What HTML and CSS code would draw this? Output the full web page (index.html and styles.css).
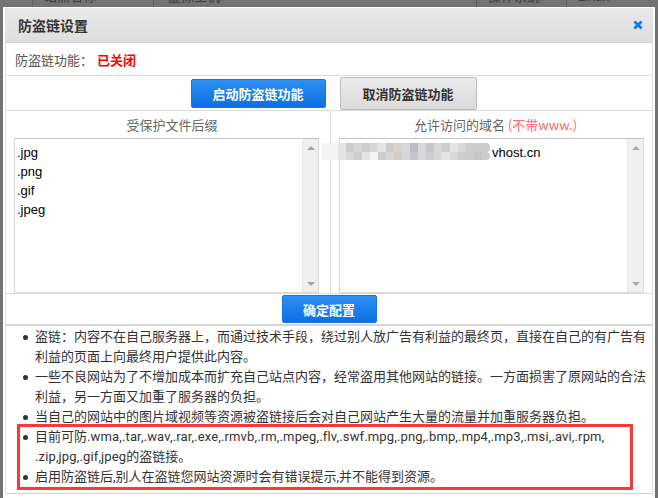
FILE: index.html
```html
<!DOCTYPE html>
<html lang="zh-CN">
<head>
<meta charset="utf-8">
<title>防盗链设置</title>
<link rel="stylesheet" href="styles.css">
</head>
<body>
<div class="bg">
  <div class="bg-row">
    <div class="bg-cell w1"></div>
    <div class="bg-cell w2">站点名称</div>
    <div class="bg-cell w3">虚拟主机</div>
    <div class="bg-cell w4">操作系统</div>
    <div class="bg-cell w5">Linux</div>
  </div>
</div>

<div class="dialog">
  <div class="title">
    <span>防盗链设置</span>
    <svg class="close" width="10" height="10" viewBox="0 0 10 10"><path d="M1.4 1.4 L8.6 8.6 M8.6 1.4 L1.4 8.6" stroke="#1578e6" stroke-width="2.8" stroke-linecap="butt"/></svg>
  </div>
  <div class="content">
    <div class="status"><span class="lbl">防盗链功能：</span><span class="off">已关闭</span></div>
    <div class="btns">
      <button class="btn blue">启动防盗链功能</button>
      <button class="btn gray">取消防盗链功能</button>
    </div>
    <div class="cols heads">
      <div class="head">受保护文件后缀</div>
      <div class="head right">允许访问的域名 <span class="pink">(不带www.)</span></div>
    </div>
    <div class="cols areas">
      <div class="cell">
        <div class="ta">
          <div class="ta-text">.jpg<br>.png<br>.gif<br>.jpeg</div>
          <div class="sb"><span class="up"></span><span class="down"></span></div>
        </div>
      </div>
      <div class="cell right">
        <div class="ta">
          <div class="ta-text"><span class="hidden-part"></span>vhost.cn</div>
          <div class="sb"><span class="up"></span><span class="down"></span></div>
        </div>
        <div class="mosaic">
          <span class="g0"></span><span class="g0"></span><span class="g1"></span><span class="g3"></span><span class="g2"></span><span class="g3"></span><span class="g2"></span><span class="g1"></span><span class="g3"></span><span class="g6"></span><span class="g2"></span><span class="g5"></span><span class="g2"></span><span class="g4"></span><span class="g2"></span><span class="g3"></span><span class="g1"></span><span class="g2"></span><span class="g3"></span><span class="g3"></span><span class="g3 end"></span>
          <span class="g0"></span><span class="g0"></span><span class="g1"></span><span class="g2"></span><span class="g3"></span><span class="g1"></span><span class="g0"></span><span class="g3"></span><span class="g2"></span><span class="g3"></span><span class="g2"></span><span class="g4"></span><span class="g2"></span><span class="g3"></span><span class="g2"></span><span class="g1"></span><span class="g2"></span><span class="g3"></span><span class="g3"></span><span class="g4"></span><span class="g3 end"></span>
        </div>
      </div>
    </div>
    <div class="save">
      <button class="btn blue small">确定配置</button>
    </div>
    <div class="notes">
      <ul>
        <li>盗链：内容不在自己服务器上，而通过技术手段，绕过别人放广告有利益的最终页，直接在自己的有广告有<br>利益的页面上向最终用户提供此内容。</li>
        <li>一些不良网站为了不增加成本而扩充自己站点内容，经常盗用其他网站的链接。一方面损害了原网站的合法<br>利益，另一方面又加重了服务器的负担。</li>
        <li>当自己的网站中的图片域视频等资源被盗链接后会对自己网站产生大量的流量并加重服务器负担。</li>
        <li>目前可防<span class="ext">.wma,.tar,.wav,.rar,.exe,.rmvb,.rm,.mpeg,.flv,.swf.mpg,.png,.bmp,.mp4,.mp3,.msi,.avi,.rpm,<br>.zip,jpg,.gif,jpeg</span>的盗链接。</li>
        <li>启用防盗链后,别人在盗链您网站资源时会有错误提示,并不能得到资源。</li>
      </ul>
      <div class="redbox"></div>
    </div>
  </div>
</div>
</body>
</html>
```

FILE: styles.css
```css
* { box-sizing: border-box; }

body {
  margin: 0;
  width: 658px;
  height: 498px;
  overflow: hidden;
  position: relative;
  background: #737373;
  font-family: "Liberation Sans", "Noto Sans CJK SC", sans-serif;
}

/* dimmed page behind the dialog */
.bg {
  height: 7px;
  overflow: hidden;
}
.bg-row {
  display: flex;
  margin-top: -11px;
  height: 18px;
}
.bg-cell {
  font-size: 13px;
  line-height: 16px;
  color: #3c3c3c;
  border-left: 1px solid #5e5e5e;
  padding-left: 11px;
  white-space: nowrap;
}
.bg-cell.w1 { width: 32px; border-left: none; }
.bg-cell.w2 { width: 121px; }
.bg-cell.w3 { width: 323px; padding-left: 14px; }
.bg-cell.w4 { width: 90px; }
.bg-cell.w5 { flex: 1; }

/* dialog */
.dialog {
  position: absolute;
  left: 3px;
  top: 7px;
  width: 652px;
  height: 500px;
  background: #fff;
  padding: 1px 2px 0;
}

.title {
  height: 35px;
  background: linear-gradient(#e9e9e9, #dedede);
  border-bottom: 1px solid #d4d4d4;
  display: flex;
  align-items: center;
  justify-content: space-between;
  padding: 0 10px 0 13px;
  font-family: "Noto Sans CJK SC", sans-serif;
  font-size: 14px;
  font-weight: bold;
  color: #333;
}
.close { display: block; }

.content {
  border-left: 1px solid #e0e0e0;
  border-right: 1px solid #e0e0e0;
  font-family: "Noto Sans CJK SC", sans-serif;
}

.status {
  height: 33px;
  border-bottom: 1px solid #dcdcdc;
  display: flex;
  align-items: center;
  padding-left: 9px;
  font-size: 13px;
  color: #555;
}
.status .off {
  color: #f00;
  font-weight: bold;
  margin-left: 4px;
}

.btns {
  height: 35px;
  border-bottom: 1px solid #dcdcdc;
  display: flex;
  align-items: center;
  justify-content: center;
  gap: 14px;
  padding-left: 9px;
}

.btn {
  font-family: "Noto Sans CJK SC", sans-serif;
  font-size: 13px;
  font-weight: bold;
  border-radius: 2px;
  padding: 0;
  cursor: pointer;
}
.btn.blue {
  width: 135px;
  height: 29px;
  color: #fff;
  background: linear-gradient(#2e90f3, #0b6fe2);
  border: 1px solid #1a76df;
}
.btn.gray {
  width: 137px;
  height: 33px;
  color: #333;
  background: linear-gradient(#ececec, #dbdbdb);
  border: 1px solid #bdbdbd;
}
.btn.blue.small {
  width: 95px;
  height: 28px;
}

.cols {
  display: grid;
  grid-template-columns: 324px 1fr;
}

.heads { height: 27px; }
.head {
  display: flex;
  align-items: center;
  justify-content: center;
  padding-left: 8px;
  font-size: 13px;
  color: #666;
}
.head.right { border-left: 1px solid #dcdcdc; }
.pink { color: #ff6565; margin-left: 3px; }

.areas {
  height: 156px;
  border-bottom: 1px solid #dcdcdc;
}
.cell { position: relative; }
.cell.right { border-left: 1px solid #dcdcdc; }

.ta {
  width: 305px;
  height: 155px;
  margin-left: 8px;
  display: flex;
  border: 1px solid #dadada;
  border-top-color: #c4c4c4;
  background: #fff;
}
.ta-text {
  flex: 1;
  padding: 4px 2px;
  font-family: "Liberation Sans", sans-serif;
  font-size: 13px;
  line-height: 19px;
  color: #000;
}
.hidden-part {
  display: inline-block;
  width: 150px;
}

.sb {
  width: 16px;
  background: #f0f0f0;
  border-left: 1px solid #e8e8e8;
  display: flex;
  flex-direction: column;
  justify-content: space-between;
  align-items: center;
  padding: 7px 0 6px;
}
.sb .up {
  width: 0;
  height: 0;
  border-left: 4px solid transparent;
  border-right: 4px solid transparent;
  border-bottom: 4px solid #a6a6a6;
}
.sb .down {
  width: 0;
  height: 0;
  border-left: 4px solid transparent;
  border-right: 4px solid transparent;
  border-top: 4px solid #a6a6a6;
}

/* privacy mosaic over the domain */
.mosaic {
  position: absolute;
  left: -9px;
  top: 5px;
  display: grid;
  grid-template-columns: repeat(21, 8px);
  grid-template-rows: 9px 8px;
}
.mosaic .g0 { background: #f4f4f4; }
.mosaic .g1 { background: #e4e4e4; }
.mosaic .g2 { background: #d8d8d8; }
.mosaic .g3 { background: #cccccc; }
.mosaic .g4 { background: #c3c5ca; }
.mosaic .g5 { background: #b9bdc5; }
.mosaic .g6 { background: #dbd3cb; }
.mosaic .end { border-radius: 0 4px 4px 0; }

.save {
  height: 32px;
  border-bottom: 2px solid #d6d6d6;
  display: flex;
  align-items: center;
  justify-content: center;
}

.notes {
  position: relative;
  padding: 1px 0 6px;
  border-bottom: 1px solid #d0d0d0;
}
.notes ul {
  margin: 0;
  padding: 0 0 0 29px;
  list-style: none;
}
.notes li {
  position: relative;
  font-family: "Roboto", "Noto Sans CJK SC", sans-serif;
  font-size: 13px;
  line-height: 20px;
  color: #333;
  white-space: nowrap;
}
.notes li::before {
  content: "";
  position: absolute;
  left: -12px;
  top: 8px;
  width: 5px;
  height: 5px;
  border-radius: 50%;
  background: #333;
}
.notes .ext { letter-spacing: 0.14px; }

.redbox {
  position: absolute;
  left: 11px;
  top: 98px;
  width: 616px;
  height: 66px;
  border: 3px solid #f53a3a;
}
```
